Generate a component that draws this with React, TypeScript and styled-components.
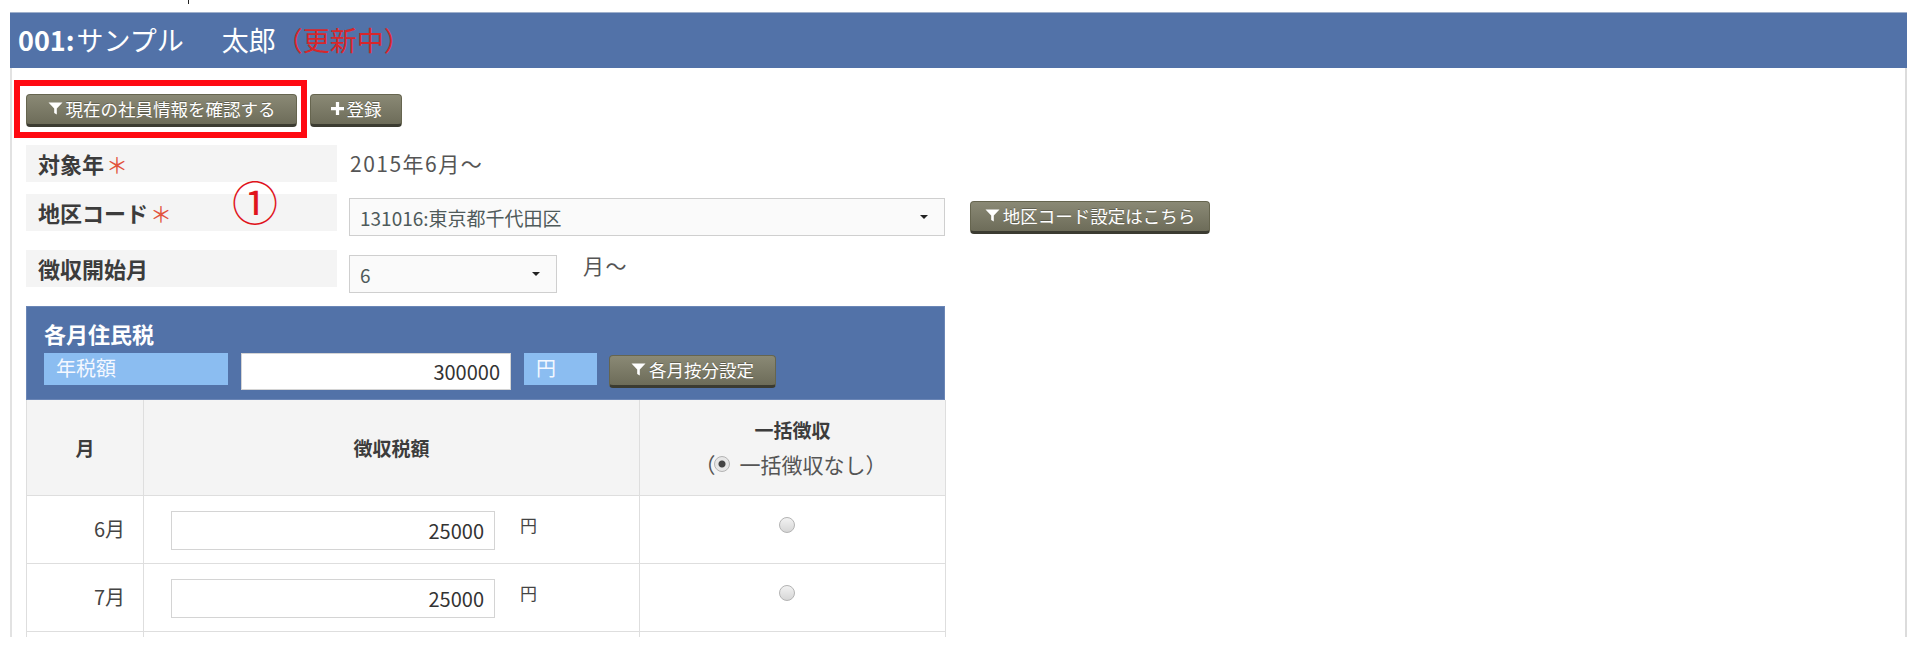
import React from 'react';
import styled, { createGlobalStyle } from 'styled-components';

const GlobalStyle = createGlobalStyle`
  html, body {
    margin: 0;
    padding: 0;
    background: #fff;
  }
  body {
    font-family: "Noto Sans CJK JP", "Noto Sans", sans-serif;
    color: #444;
  }
`;

const TopStrip = styled.div`
  height: 12px;
`;

const Tick = styled.div`
  margin-left: 188px;
  width: 1px;
  height: 4px;
  background: #222;
`;

const Frame = styled.div`
  margin-left: 10px;
  width: 1897px;
  height: 625px;
  max-height: 625px;
  overflow: hidden;
`;

const Header = styled.div`
  height: 56px;
  box-sizing: border-box;
  border-top: 1px solid #9fb0cc;
  background: #5272a8;
  color: #fff;
  font-size: 27px;
  line-height: 54px;
  padding-left: 8px;
  white-space: nowrap;
`;

const Code = styled.span`
  font-weight: bold;
  margin-right: 2px;
`;

const NameGap = styled.span`
  display: inline-block;
  width: 38px;
`;

const Status = styled.span`
  color: #d8262b;
`;

const Body = styled.div`
  position: relative;
  height: 569px;
  overflow: hidden;
  box-sizing: border-box;
  border-left: 2px solid #e2e2e2;
  border-right: 2px solid #dcdcdc;
  padding-left: 14px;
  padding-top: 12px;
`;

const Toolbar = styled.div`
  display: flex;
  align-items: flex-start;
`;

const Highlight = styled.div`
  margin-left: -12px;
  border: 6px solid #ff0a12;
  padding: 8px 4px 5px 6px;
`;

const Button = styled.button<{ $w: number; $mt?: number; $ml?: number }>`
  width: ${p => p.$w}px;
  height: 33px;
  margin-top: ${p => p.$mt ?? 0}px;
  margin-left: ${p => p.$ml ?? 0}px;
  flex: none;
  box-sizing: border-box;
  display: flex;
  align-items: center;
  justify-content: center;
  gap: 3px;
  padding: 0 0 2px;
  border: 1px solid #66654f;
  border-bottom: 3px solid #3b3b31;
  border-radius: 4px;
  background: linear-gradient(#8a8975, #6d6c59);
  color: #fff;
  font-family: "Noto Sans CJK JP", sans-serif;
  font-size: 17.5px;
  white-space: nowrap;
  text-shadow: 0 -1px 0 rgba(0, 0, 0, 0.25);
  cursor: pointer;
`;

const Row = styled.div<{ $mt: number }>`
  display: flex;
  align-items: flex-start;
  margin-top: ${p => p.$mt}px;
`;

const Label = styled.div`
  width: 311px;
  height: 37px;
  flex: none;
  box-sizing: border-box;
  padding-left: 12px;
  background: #f4f4f4;
  font-size: 22px;
  font-weight: bold;
  line-height: 36px;
  color: #3c3c3c;
`;

const Required = styled.span`
  color: #e2533e;
  font-weight: normal;
  margin-left: 2px;
`;

const ValueText = styled.div<{ $ml: number; $lh: number }>`
  margin-left: ${p => p.$ml}px;
  font-size: 21px;
  letter-spacing: 1.5px;
  line-height: ${p => p.$lh}px;
  color: #555;
  white-space: nowrap;
`;

const SelectBox = styled.div<{ $w: number; $mt: number }>`
  width: ${p => p.$w}px;
  height: 38px;
  margin-top: ${p => p.$mt}px;
  margin-left: 12px;
  flex: none;
  box-sizing: border-box;
  display: flex;
  align-items: center;
  justify-content: space-between;
  padding: 0 16px 0 10px;
  border: 1px solid #cfcfcf;
  background: #fafafa;
  font-size: 19px;
  color: #4f5a5a;
`;

const Caret = styled.span`
  width: 0;
  height: 0;
  border-left: 4px solid transparent;
  border-right: 4px solid transparent;
  border-top: 4px solid #222;
`;

const Marker = styled.div`
  position: absolute;
  left: 220px;
  top: 107px;
  font-size: 46px;
  line-height: 50px;
  color: #e0141c;
  font-family: "Noto Sans CJK JP", sans-serif;
`;

const Block = styled.div`
  width: 919px;
  margin-top: 13px;
`;

const Panel = styled.div`
  box-sizing: border-box;
  height: 94px;
  padding: 12px 0 0 17px;
  background: #5272a8;
  border: 1px solid #6b86b6;
`;

const PanelTitle = styled.div`
  font-size: 22px;
  font-weight: bold;
  line-height: 29px;
  color: #fff;
`;

const PanelRow = styled.div`
  display: flex;
  align-items: flex-start;
  gap: 13px;
  margin-top: 5px;
`;

const Tag = styled.div<{ $w: number }>`
  width: ${p => p.$w}px;
  height: 32px;
  flex: none;
  box-sizing: border-box;
  padding-left: 12px;
  background: #8bbdf1;
  color: #f4f8ff;
  font-size: 20px;
  line-height: 29px;
`;

const AmountInput = styled.input<{ $w: number; $h: number }>`
  width: ${p => p.$w}px;
  height: ${p => p.$h}px;
  flex: none;
  box-sizing: border-box;
  padding: 0 10px 0 0;
  border: 1px solid #d4d4d4;
  background: #fff;
  text-align: right;
  font-family: "Noto Sans CJK JP", sans-serif;
  font-size: 20px;
  color: #333;
  outline: none;
`;

const Table = styled.table`
  width: 919px;
  border-collapse: collapse;
  table-layout: fixed;
`;

const Th = styled.th<{ $w: number }>`
  width: ${p => p.$w}px;
  height: 95px;
  box-sizing: border-box;
  padding: 0;
  border: 1px solid #dedede;
  border-top: none;
  background: #f4f4f4;
  font-weight: bold;
  font-size: 19px;
  color: #3c3c3c;
  vertical-align: middle;
`;

const SubHead = styled.div`
  font-weight: normal;
  font-size: 21px;
  color: #555;
  display: flex;
  align-items: center;
  justify-content: center;
  margin-top: 6px;
  padding-right: 4px;
`;

const Td = styled.td<{ $align: 'left' | 'right' | 'center'; $h: number }>`
  height: ${p => p.$h}px;
  box-sizing: border-box;
  padding: 0;
  border: 1px solid #dedede;
  text-align: ${p => p.$align};
  vertical-align: top;
  font-size: 20px;
  color: #444;
`;

const MonthText = styled.div`
  padding: 18px 18px 0 0;
  line-height: 30px;
`;

const AmountCell = styled.div`
  display: flex;
  align-items: flex-start;
  padding: 15px 0 0 27px;
`;

const Unit = styled.span`
  margin-left: 25px;
  margin-top: 4px;
  font-size: 17px;
  line-height: 20px;
  color: #444;
`;

const Radio = styled.span<{ $checked?: boolean }>`
  display: inline-block;
  flex: none;
  width: 16px;
  height: 16px;
  box-sizing: border-box;
  border-radius: 50%;
  border: 1px solid #b4b4b4;
  background: ${p =>
    p.$checked
      ? 'radial-gradient(circle, #444 0 3px, #e6e6e6 4px)'
      : 'linear-gradient(#f2f2f2, #d6d6d6)'};
`;

const HeadRadio = styled(Radio)`
  margin: 0 10px 0 -2px;
`;

const RadioCell = styled.div`
  display: flex;
  justify-content: center;
  padding: 21px 12px 0 0;
`;

const FunnelIcon = () => (
  <svg width="15" height="13" viewBox="0 0 15 13">
    <path d="M0.5 0.5 H14.5 L8.8 6.5 V12.5 L6.2 11 V6.5 Z" fill="#fff" />
  </svg>
);

const PlusIcon = () => (
  <svg width="13" height="13" viewBox="0 0 12 12">
    <path d="M4.5 0 H7.5 V4.5 H12 V7.5 H7.5 V12 H4.5 V7.5 H0 V4.5 H4.5 Z" fill="#fff" />
  </svg>
);

const months = [
  { label: '6月', amount: '25000' },
  { label: '7月', amount: '25000' },
];

export default function App() {
  return (
    <>
      <GlobalStyle />
      <TopStrip>
        <Tick />
      </TopStrip>
      <Frame>
        <Header>
          <Code>001:</Code>サンプル<NameGap />太郎<Status>（更新中）</Status>
        </Header>
        <Body>
          <Toolbar>
            <Highlight>
              <Button $w={271}>
                <FunnelIcon />
                現在の社員情報を確認する
              </Button>
            </Highlight>
            <Button $w={92} $mt={14} $ml={3}>
              <PlusIcon />
              登録
            </Button>
          </Toolbar>

          <Row $mt={7}>
            <Label>
              対象年<Required>＊</Required>
            </Label>
            <ValueText $ml={13} $lh={36}>2015年6月～</ValueText>
          </Row>

          <Row $mt={12}>
            <Label>
              地区コード<Required>＊</Required>
            </Label>
            <SelectBox $w={596} $mt={4}>
              <span>131016:東京都千代田区</span>
              <Caret />
            </SelectBox>
            <Button $w={240} $mt={7} $ml={25}>
              <FunnelIcon />
              地区コード設定はこちら
            </Button>
          </Row>

          <Row $mt={14}>
            <Label>徴収開始月</Label>
            <SelectBox $w={208} $mt={5}>
              <span>6</span>
              <Caret />
            </SelectBox>
            <ValueText $ml={26} $lh={30}>月～</ValueText>
          </Row>

          <Marker>①</Marker>

          <Block>
            <Panel>
              <PanelTitle>各月住民税</PanelTitle>
              <PanelRow>
                <Tag $w={184}>年税額</Tag>
                <AmountInput $w={270} $h={37} defaultValue="300000" />
                <Tag $w={73}>円</Tag>
                <Button $w={167} $mt={2} $ml={-1}>
                  <FunnelIcon />
                  各月按分設定
                </Button>
              </PanelRow>
            </Panel>
            <Table>
              <thead>
                <tr>
                  <Th $w={117}>月</Th>
                  <Th $w={496}>徴収税額</Th>
                  <Th $w={306}>
                    一括徴収
                    <SubHead>
                      <span>（</span>
                      <HeadRadio $checked />
                      <span>一括徴収なし）</span>
                    </SubHead>
                  </Th>
                </tr>
              </thead>
              <tbody>
                {months.map(m => (
                  <tr key={m.label}>
                    <Td $align="right" $h={68}>
                      <MonthText>{m.label}</MonthText>
                    </Td>
                    <Td $align="left" $h={68}>
                      <AmountCell>
                        <AmountInput $w={324} $h={39} defaultValue={m.amount} />
                        <Unit>円</Unit>
                      </AmountCell>
                    </Td>
                    <Td $align="center" $h={68}>
                      <RadioCell>
                        <Radio />
                      </RadioCell>
                    </Td>
                  </tr>
                ))}
                <tr>
                  <Td $align="right" $h={68} />
                  <Td $align="left" $h={68} />
                  <Td $align="center" $h={68} />
                </tr>
              </tbody>
            </Table>
          </Block>
        </Body>
      </Frame>
    </>
  );
}
